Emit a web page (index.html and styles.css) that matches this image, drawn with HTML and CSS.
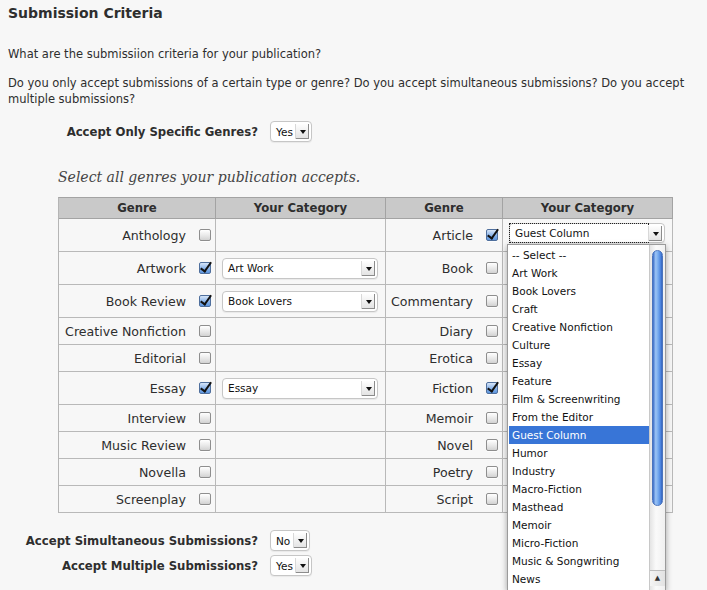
FILE: index.html
```html
<!DOCTYPE html>
<html>
<head>
<meta charset="utf-8">
<title>Submission Criteria</title>
<link rel="stylesheet" href="styles.css">
</head>
<body>
<div class="page">
  <h2 class="title">Submission Criteria</h2>
  <p class="intro intro-1">What are the submissiion criteria for your publication?</p>
  <p class="intro intro-2">Do you only accept submissions of a certain type or genre? Do you accept simultaneous submissions? Do you accept multiple submissions?</p>

  <div class="fields fields-top">
    <span class="field-label">Accept Only Specific Genres?</span>
    <span class="select select-yes"><span class="select-text">Yes</span><span class="select-btn"></span></span>
  </div>

  <p class="lead">Select all genres your publication accepts.</p>

  <table class="genres">
    <colgroup>
      <col class="c-genre1"><col class="c-cat"><col class="c-genre2"><col class="c-cat">
    </colgroup>
    <thead>
      <tr><th>Genre</th><th>Your Category</th><th>Genre</th><th>Your Category</th></tr>
    </thead>
    <tbody>
      <tr class="tall">
        <td><div class="genre">Anthology<span class="cb"></span></div></td>
        <td></td>
        <td><div class="genre">Article<span class="cb on"></span></div></td>
        <td><span class="select select-cat select-focus"><span class="select-text">Guest Column</span><span class="select-btn"></span></span></td>
      </tr>
      <tr class="tall">
        <td><div class="genre">Artwork<span class="cb on"></span></div></td>
        <td><span class="select select-cat"><span class="select-text">Art Work</span><span class="select-btn"></span></span></td>
        <td><div class="genre">Book<span class="cb"></span></div></td>
        <td></td>
      </tr>
      <tr class="tall">
        <td><div class="genre">Book Review<span class="cb on"></span></div></td>
        <td><span class="select select-cat"><span class="select-text">Book Lovers</span><span class="select-btn"></span></span></td>
        <td><div class="genre">Commentary<span class="cb"></span></div></td>
        <td></td>
      </tr>
      <tr class="short">
        <td><div class="genre">Creative Nonfiction<span class="cb"></span></div></td>
        <td></td>
        <td><div class="genre">Diary<span class="cb"></span></div></td>
        <td></td>
      </tr>
      <tr class="short">
        <td><div class="genre">Editorial<span class="cb"></span></div></td>
        <td></td>
        <td><div class="genre">Erotica<span class="cb"></span></div></td>
        <td></td>
      </tr>
      <tr class="tall">
        <td><div class="genre">Essay<span class="cb on"></span></div></td>
        <td><span class="select select-cat"><span class="select-text">Essay</span><span class="select-btn"></span></span></td>
        <td><div class="genre">Fiction<span class="cb on"></span></div></td>
        <td></td>
      </tr>
      <tr class="short">
        <td><div class="genre">Interview<span class="cb"></span></div></td>
        <td></td>
        <td><div class="genre">Memoir<span class="cb"></span></div></td>
        <td></td>
      </tr>
      <tr class="short">
        <td><div class="genre">Music Review<span class="cb"></span></div></td>
        <td></td>
        <td><div class="genre">Novel<span class="cb"></span></div></td>
        <td></td>
      </tr>
      <tr class="short">
        <td><div class="genre">Novella<span class="cb"></span></div></td>
        <td></td>
        <td><div class="genre">Poetry<span class="cb"></span></div></td>
        <td></td>
      </tr>
      <tr class="short">
        <td><div class="genre">Screenplay<span class="cb"></span></div></td>
        <td></td>
        <td><div class="genre">Script<span class="cb"></span></div></td>
        <td></td>
      </tr>
    </tbody>
  </table>

  <div class="fields fields-bottom">
    <span class="field-label">Accept Simultaneous Submissions?</span>
    <span class="select select-no"><span class="select-text">No</span><span class="select-btn"></span></span>
    <span class="field-label">Accept Multiple Submissions?</span>
    <span class="select select-yes"><span class="select-text">Yes</span><span class="select-btn"></span></span>
  </div>
</div>

<div class="popup">
  <ul class="popup-list">
    <li>-- Select --</li>
    <li>Art Work</li>
    <li>Book Lovers</li>
    <li>Craft</li>
    <li>Creative Nonfiction</li>
    <li>Culture</li>
    <li>Essay</li>
    <li>Feature</li>
    <li>Film &amp; Screenwriting</li>
    <li>From the Editor</li>
    <li class="selected">Guest Column</li>
    <li>Humor</li>
    <li>Industry</li>
    <li>Macro-Fiction</li>
    <li>Masthead</li>
    <li>Memoir</li>
    <li>Micro-Fiction</li>
    <li>Music &amp; Songwriting</li>
    <li>News</li>
  </ul>
  <div class="scrollbar">
    <div class="thumb"></div>
    <div class="track-space"></div>
    <div class="scroll-btn">&#9650;</div>
  </div>
</div>
</body>
</html>
```
FILE: styles.css
```css
* { box-sizing: border-box; }
html, body { margin: 0; padding: 0; }
body {
  background: #f7f7f7;
  font-family: "DejaVu Sans", Verdana, sans-serif;
  color: #333;
  width: 707px;
  height: 590px;
  overflow: hidden;
  position: relative;
}
.page { padding: 4px 8px 0; }
.title {
  margin: 0;
  font-size: 14px;
  line-height: 18px;
  font-weight: bold;
  color: #2e2e2e;
}
.intro {
  margin: 0;
  font-size: 11.5px;
  line-height: 16px;
  color: #2e2e2e;
}
.intro-1 { margin-top: 24px; }
.intro-2 { margin-top: 13px; }

.fields {
  display: grid;
  grid-template-columns: 250px auto;
  column-gap: 12px;
  row-gap: 4px;
  align-items: center;
  justify-items: start;
}
.fields-top { margin-top: 14px; }
.fields-bottom { margin-top: 17px; }
.field-label {
  justify-self: end;
  font-size: 11.7px;
  font-weight: bold;
  color: #2e2e2e;
}

.lead {
  margin: 25px 0 0 50px;
  font-family: "DejaVu Serif", Georgia, serif;
  font-style: italic;
  font-size: 14px;
  line-height: 20px;
  color: #444;
}

/* selects */
.select {
  position: relative;
  display: inline-flex;
  align-items: center;
  height: 21px;
  background: #fff;
  border: 1px solid #c6c6c6;
  border-radius: 4px;
  box-shadow: 0 1px 1px rgba(0,0,0,0.06);
  font-size: 10.5px;
  color: #111;
}
.select-text { padding-left: 5px; white-space: nowrap; }
.select-btn {
  position: absolute;
  right: 2px;
  top: 2px;
  width: 14px;
  height: 15px;
  background: linear-gradient(#fefefe, #e2e2e2);
  border-left: 1px solid #d8d8d8;
  box-shadow: inset -1px -1px 0 #8c8c8c;
}
.select-btn::after {
  content: "";
  position: absolute;
  left: 4px;
  top: 6px;
  border-left: 3px solid transparent;
  border-right: 3px solid transparent;
  border-top: 4px solid #111;
}
.select-yes { width: 42px; }
.select-no { width: 40px; }
.select-cat { width: 156px; margin-left: 6px; }
.select-focus { height: 20px; }
.select-focus .select-text {
  position: absolute;
  left: -1px; top: -1px; bottom: -1px; right: 15px;
  border: 1px dotted #222;
  padding-left: 5px;
  display: flex;
  align-items: center;
}

/* table */
.genres {
  margin: 10px 0 0 50px;
  width: 614px;
  table-layout: fixed;
  border-collapse: separate;
  border-spacing: 0;
  border-top: 1px solid #a3a3a3;
  border-left: 1px solid #b5b5b5;
}
.c-genre1 { width: 157px; }
.c-cat { width: 170px; }
.c-genre2 { width: 117px; }
.genres th {
  height: 21px;
  padding: 0;
  background: #c9c9c9;
  border-right: 1px solid #a3a3a3;
  border-bottom: 1px solid #a3a3a3;
  font-size: 11.7px;
  font-weight: bold;
  color: #2e2e2e;
  text-align: center;
}
.genres td {
  padding: 0;
  border-right: 1px solid #b9b9b9;
  border-bottom: 1px solid #b9b9b9;
  vertical-align: middle;
}
.genres tr.tall td { height: 33px; }
.genres tr.short td { height: 27px; }
.genre {
  display: flex;
  justify-content: flex-end;
  align-items: center;
  gap: 13px;
  padding-right: 4px;
  font-size: 12.6px;
  color: #2e2e2e;
  white-space: nowrap;
}

/* checkboxes */
.cb {
  position: relative;
  flex: none;
  width: 12px;
  height: 12px;
  border: 1px solid #8e8e8e;
  border-radius: 2px;
  background: linear-gradient(#ffffff, #e6e6e6 60%, #d2d2d2);
  box-shadow: 0 1px 0 rgba(255,255,255,0.8);
}
.cb.on {
  border-color: #4f6f9d;
  background: linear-gradient(#d6e5f8, #8ab4ea 55%, #5d95de);
}
.cb.on::after {
  content: "";
  position: absolute;
  left: 3px;
  top: -3px;
  width: 4px;
  height: 10px;
  border-right: 2.5px solid #111;
  border-bottom: 2.5px solid #111;
  transform: rotate(35deg);
}

/* popup list */
.popup {
  position: absolute;
  left: 507px;
  top: 244px;
  width: 159px;
  height: 346px;
  display: flex;
  background: #fff;
  border: 1px solid #9b9b9b;
  border-bottom: none;
  box-shadow: 0 2px 6px rgba(0,0,0,0.35);
}
.popup-list {
  list-style: none;
  margin: 0;
  padding: 1px 0 0 1px;
  flex: 1;
  font-size: 10.5px;
  color: #111;
}
.popup-list li {
  height: 18px;
  line-height: 18px;
  padding-left: 3px;
  white-space: nowrap;
}
.popup-list li.selected { background: #3875d7; color: #fff; }
.scrollbar {
  flex: none;
  width: 16px;
  display: flex;
  flex-direction: column;
  align-items: center;
  background: linear-gradient(to right, #e4e4e4, #fafafa 40%, #f0f0f0);
  border-left: 1px solid #c8c8c8;
}
.thumb {
  margin-top: 5px;
  width: 11px;
  height: 256px;
  border-radius: 6px;
  border: 1px solid #4a74bd;
  background: linear-gradient(to right, #3a6cc8, #9cc4f5 30%, #78acef 55%, #4a83de 85%, #3563bb);
}
.track-space { height: 64px; }
.scroll-btn {
  width: 100%;
  height: 16px;
  border-top: 1px solid #bdbdbd;
  background: linear-gradient(to right, #f4f4f4, #e2e2e2);
  font-size: 7px;
  line-height: 15px;
  text-align: center;
  color: #333;
}
```
